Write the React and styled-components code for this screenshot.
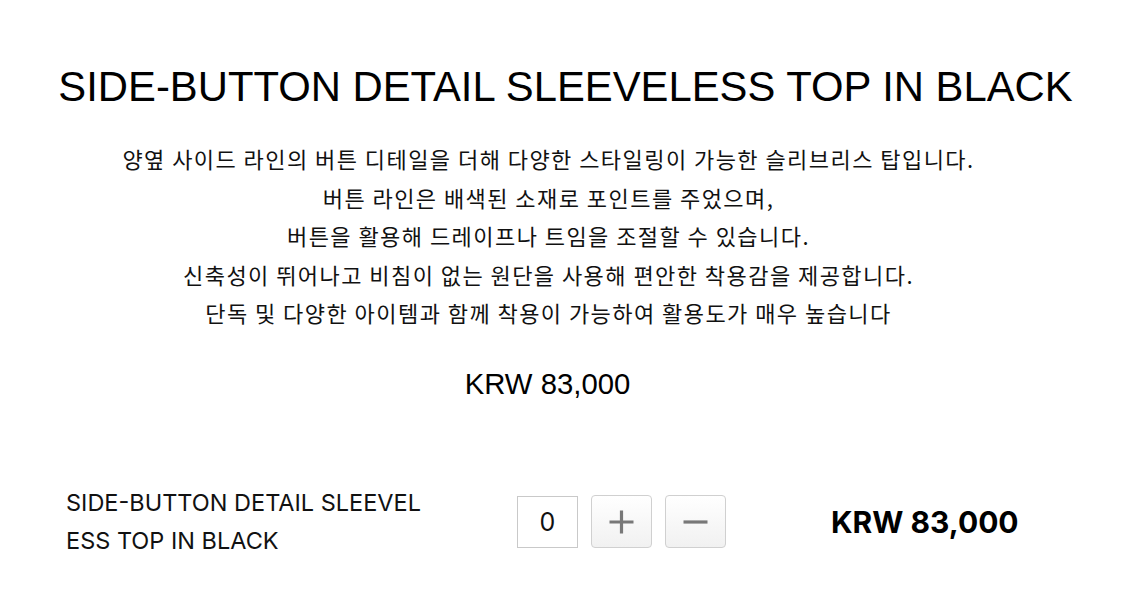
import React, { useState } from "react";
import styled, { createGlobalStyle } from "styled-components";

const GlobalStyle = createGlobalStyle`
  html, body {
    margin: 0;
    padding: 0;
    background: #ffffff;
  }
  body {
    font-family: "Liberation Sans", Arial, "Noto Sans CJK KR", sans-serif;
    color: #111111;
  }
`;

const product = {
  name: "SIDE-BUTTON DETAIL SLEEVELESS TOP IN BLACK",
  description: [
    "양옆 사이드 라인의 버튼 디테일을 더해 다양한 스타일링이 가능한 슬리브리스 탑입니다.",
    "버튼 라인은 배색된 소재로 포인트를 주었으며,",
    "버튼을 활용해 드레이프나 트임을 조절할 수 있습니다.",
    "신축성이 뛰어나고 비침이 없는 원단을 사용해 편안한 착용감을 제공합니다.",
    "단독 및 다양한 아이템과 함께 착용이 가능하여 활용도가 매우 높습니다",
  ],
  price: 83000,
};

const currencyFormat = (n) => `KRW ${n.toLocaleString("en-US")}`;

function App() {
  const [qty, setQty] = useState(0);

  return (
    <>
      <GlobalStyle />
      <PageStyled>
        <h1 className="title">{product.name}</h1>
        <div className="description">
          {product.description.map((line) => (
            <p key={line}>{line}</p>
          ))}
        </div>
        <div className="price">{currencyFormat(product.price)}</div>
        <OrderRow>
          <div className="name">
            SIDE-BUTTON DETAIL SLEEVEL
            <br />
            ESS TOP IN BLACK
          </div>
          <div className="counter">
            <QtyInput value={qty} readOnly />
            <StepButton onClick={() => setQty(qty + 1)}>
              <svg width="25" height="24" viewBox="0 0 25 24">
                <path d="M12.5 0.5v23M0.5 12h24" stroke="#787878" strokeWidth="3.2" />
              </svg>
            </StepButton>
            <StepButton onClick={() => setQty(Math.max(0, qty - 1))}>
              <svg width="25" height="24" viewBox="0 0 25 24">
                <path d="M0.5 12h24" stroke="#787878" strokeWidth="3.2" />
              </svg>
            </StepButton>
          </div>
          <div className="total">{currencyFormat(product.price)}</div>
        </OrderRow>
      </PageStyled>
    </>
  );
}

const PageStyled = styled.div`
  width: 1125px;
  height: 605px;
  overflow: hidden;
  display: flex;
  flex-direction: column;
  align-items: center;
  .title {
    margin: 59px 0 0 0;
    width: 1125px;
    padding-left: 6px;
    box-sizing: border-box;
    text-align: center;
    font-size: 41.8px;
    font-weight: 400;
    line-height: 56px;
    color: #000;
  }
  .description {
    margin-top: 24px;
    width: 1125px;
    padding-right: 28px;
    box-sizing: border-box;
    text-align: center;
    font-family: "Noto Sans CJK KR", sans-serif;
    font-size: 22px;
    letter-spacing: 1.45px;
    line-height: 38.5px;
    color: #111;
    p {
      margin: 0;
    }
  }
  .price {
    margin-top: 34px;
    width: 1125px;
    padding-right: 30px;
    box-sizing: border-box;
    text-align: center;
    font-size: 29.3px;
    line-height: 36px;
    color: #000;
  }
`;

const OrderRow = styled.div`
  width: 1125px;
  margin-top: 82px;
  padding-left: 66px;
  box-sizing: border-box;
  display: flex;
  align-items: center;
  font-family: Inter, "Noto Sans", sans-serif;
  .name {
    width: 451px;
    font-size: 23.5px;
    line-height: 38px;
    color: #111;
  }
  .counter {
    display: flex;
    align-items: center;
    gap: 13px;
  }
  .total {
    margin-left: 105px;
    font-size: 30px;
    font-weight: 700;
    color: #000;
  }
`;

const QtyInput = styled.input`
  width: 61px;
  height: 52px;
  box-sizing: border-box;
  border: 1px solid #c9c9c9;
  border-radius: 0;
  text-align: center;
  font-family: Inter, sans-serif;
  font-size: 25px;
  color: #111;
  padding: 0;
  outline: none;
`;

const StepButton = styled.button`
  width: 61px;
  height: 53px;
  box-sizing: border-box;
  border: 1px solid #d0d0d0;
  border-radius: 4px;
  background: linear-gradient(#ffffff, #f1f1f1);
  display: flex;
  align-items: center;
  justify-content: center;
  padding: 0;
  cursor: pointer;
`;

export default App;
